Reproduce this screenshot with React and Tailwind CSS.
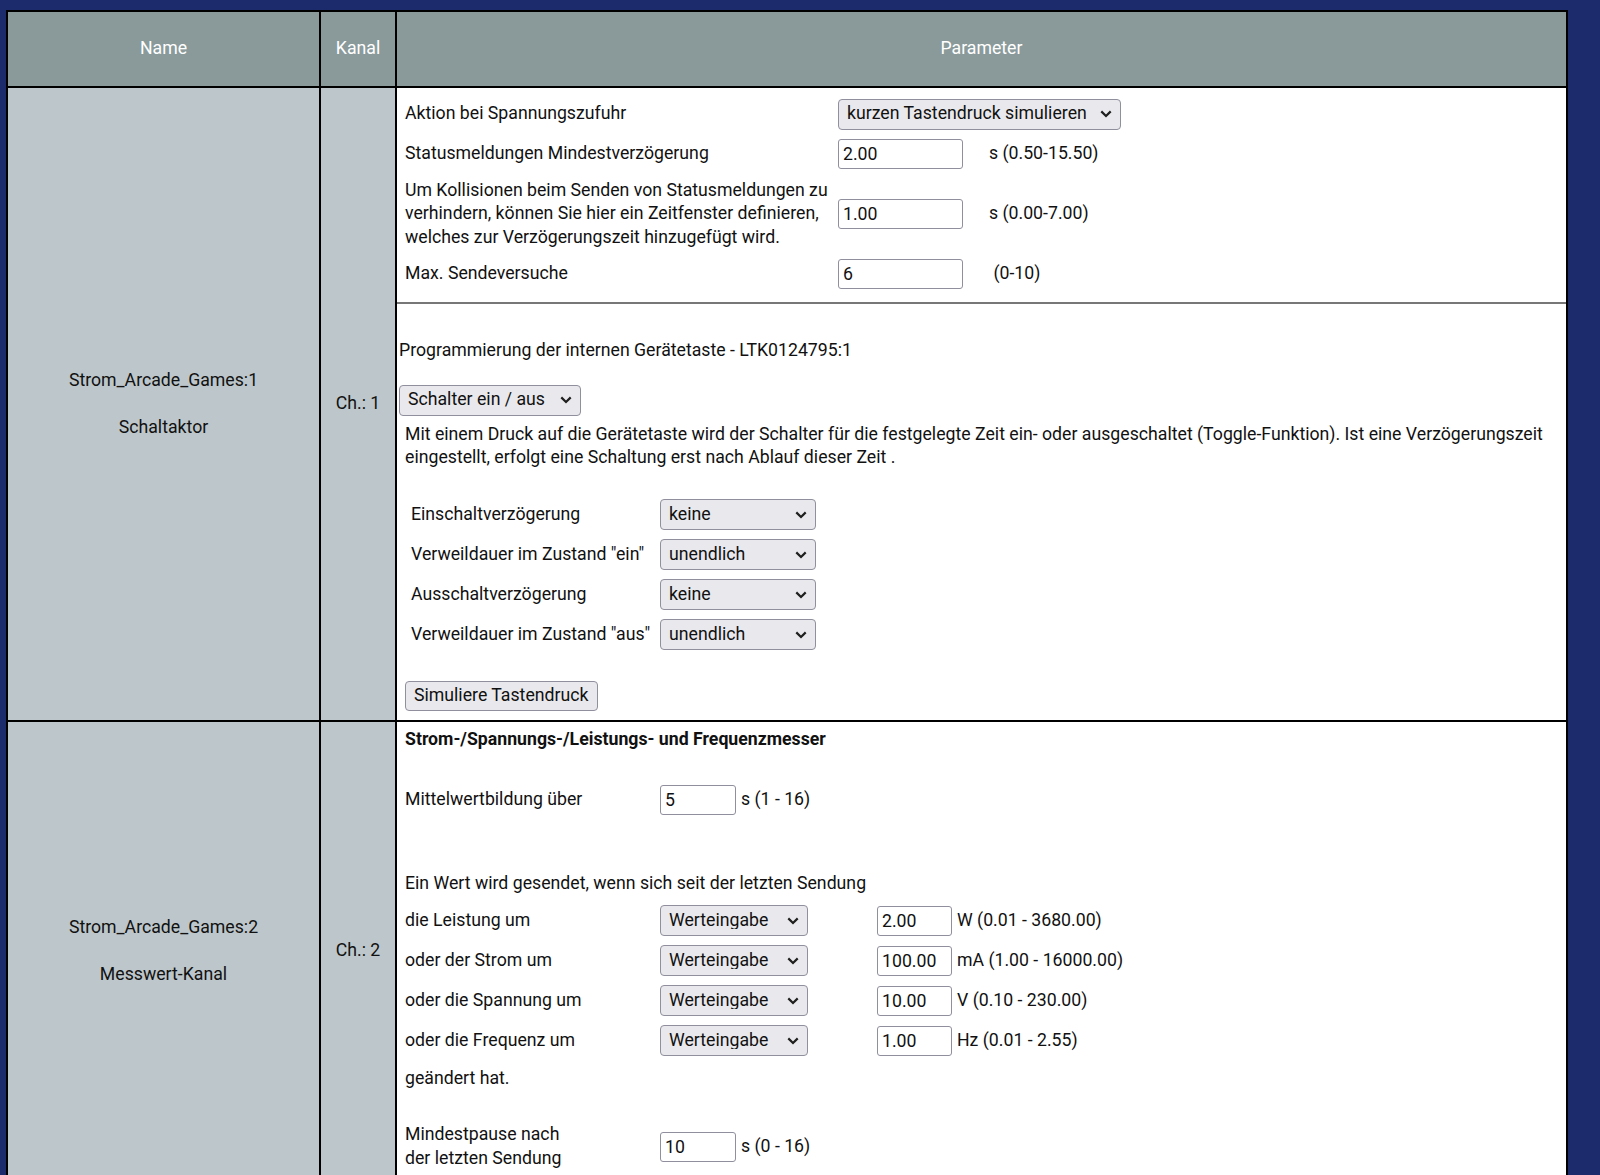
import React from "react";

const Chevron = () => (
  <svg
    width="12"
    height="8"
    viewBox="0 0 12 8"
    className="absolute right-[9px] top-1/2 -translate-y-1/2 pointer-events-none"
  >
    <polyline points="1.3,1.4 6,6 10.7,1.4" fill="none" stroke="#1f1f1f" strokeWidth="2.2" />
  </svg>
);

const Select = ({ value, width }) => (
  <div className={`relative ${width}`}>
    <select
      defaultValue={value}
      className="appearance-none w-full h-[31px] bg-[#e9e9ed] border border-[#8f8f9d] rounded-[4px] pl-2 pr-7 text-[17.7px] text-[#111] leading-none"
    >
      <option>{value}</option>
    </select>
    <Chevron />
  </div>
);

const Input = ({ value, width }) => (
  <input
    readOnly
    value={value}
    className={`${width} h-[30px] bg-white border border-[#8f8f9d] rounded-[3px] px-1 text-[17.7px] text-[#111]`}
  />
);

const Button = ({ children }) => (
  <button className="h-[30px] bg-[#e9e9ed] border border-[#8f8f9d] rounded-[4px] px-2 text-[17.7px] text-[#111]">
    {children}
  </button>
);

const NameCell = ({ name, type }) => (
  <div className="flex items-center justify-center text-center bg-[#bdc7cb] border-r-2 border-black">
    <p>
      {name}
      <br />
      <br />
      {type}
    </p>
  </div>
);

const KanalCell = ({ ch }) => (
  <div className="flex items-center justify-center bg-[#bdc7cb] border-r-2 border-black">
    <p>{ch}</p>
  </div>
);

const topRows = [
  { label: "Statusmeldungen Mindestverzögerung", value: "2.00", unit: "s (0.50-15.50)", h: "h-[40px]" },
  {
    label: "Um Kollisionen beim Senden von Statusmeldungen zu verhindern, können Sie hier ein Zeitfenster definieren, welches zur Verzögerungszeit hinzugefügt wird.",
    value: "1.00",
    unit: "s (0.00-7.00)",
    h: "h-[80px]",
  },
  { label: "Max. Sendeversuche", value: "6", unit: "\u00a0(0-10)", h: "h-[40px]" },
];

const timeRows = [
  { label: "Einschaltverzögerung", value: "keine" },
  { label: 'Verweildauer im Zustand "ein"', value: "unendlich" },
  { label: "Ausschaltverzögerung", value: "keine" },
  { label: 'Verweildauer im Zustand "aus"', value: "unendlich" },
];

const deltaRows = [
  { label: "die Leistung um", value: "2.00", unit: "W (0.01 - 3680.00)" },
  { label: "oder der Strom um", value: "100.00", unit: "mA (1.00 - 16000.00)" },
  { label: "oder die Spannung um", value: "10.00", unit: "V (0.10 - 230.00)" },
  { label: "oder die Frequenz um", value: "1.00", unit: "Hz (0.01 - 2.55)" },
];

export default function App() {
  return (
    <div
      className="min-h-screen bg-[#1b2b6b] pt-[10px] pl-[6px] pb-10 text-[17.7px] leading-[23.5px] text-[#111]"
      style={{ fontFamily: "Roboto, 'Noto Sans', sans-serif" }}
    >
      <div className="w-[1562px] border-2 border-black grid grid-cols-[313px_76px_1fr]">
        {/* header */}
        <div className="h-[76px] flex items-center justify-center bg-[#8a9a9b] text-white border-r-2 border-b-2 border-black">
          Name
        </div>
        <div className="h-[76px] flex items-center justify-center bg-[#8a9a9b] text-white border-r-2 border-b-2 border-black">
          Kanal
        </div>
        <div className="h-[76px] flex items-center justify-center bg-[#8a9a9b] text-white border-b-2 border-black">
          Parameter
        </div>

        {/* row 1 */}
        <NameCell name="Strom_Arcade_Games:1" type="Schaltaktor" />
        <KanalCell ch="Ch.: 1" />
        <div className="bg-white flex flex-col pt-[6px] pb-[9px]">
          <div className="pl-[8px]">
            <div className="h-[40px] flex items-center">
              <span className="w-[433px]">Aktion bei Spannungszufuhr</span>
              <Select value="kurzen Tastendruck simulieren" width="w-[283px]" />
            </div>
            {topRows.map((r) => (
              <div key={r.value} className={`${r.h} flex items-center`}>
                <span className="w-[433px] pr-[4px]">{r.label}</span>
                <div className="w-[151px]">
                  <Input value={r.value} width="w-[125px]" />
                </div>
                <span>{r.unit}</span>
              </div>
            ))}
          </div>
          <div className="mt-[8px] h-[2px] bg-[#777]" />
          <p className="mt-[35px] pl-[2px]">Programmierung der internen Gerätetaste - LTK0124795:1</p>
          <div className="mt-[22px] pl-[2px]">
            <Select value="Schalter ein / aus" width="w-[182px]" />
          </div>
          <p className="mt-[7px] pl-[8px] pr-[10px]">
            Mit einem Druck auf die Gerätetaste wird der Schalter für die festgelegte Zeit ein- oder ausgeschaltet
            (Toggle-Funktion). Ist eine Verzögerungszeit eingestellt, erfolgt eine Schaltung erst nach Ablauf dieser Zeit .
          </p>
          <div className="mt-[25px] pl-[14px]">
            {timeRows.map((r) => (
              <div key={r.label} className="h-[40px] flex items-center">
                <span className="w-[249px]">{r.label}</span>
                <Select value={r.value} width="w-[156px]" />
              </div>
            ))}
          </div>
          <div className="mt-[26px] pl-[8px]">
            <Button>Simuliere Tastendruck</Button>
          </div>
        </div>

        {/* row 2 */}
        <div className="col-span-3 h-[2px] bg-black" />
        <NameCell name="Strom_Arcade_Games:2" type="Messwert-Kanal" />
        <KanalCell ch="Ch.: 2" />
        <div className="bg-white flex flex-col pt-[6px] pb-[10px] pl-[8px]">
          <p className="font-bold">Strom-/Spannungs-/Leistungs- und Frequenzmesser</p>
          <div className="mt-[29px] h-[40px] flex items-center">
            <span className="w-[255px]">Mittelwertbildung über</span>
            <Input value="5" width="w-[76px]" />
            <span className="ml-[5px]">s (1 - 16)</span>
          </div>
          <p className="mt-[52px]">Ein Wert wird gesendet, wenn sich seit der letzten Sendung</p>
          <div className="mt-[5px]">
            {deltaRows.map((r) => (
              <div key={r.label} className="h-[40px] flex items-center">
                <span className="w-[255px]">{r.label}</span>
                <div className="w-[217px]">
                  <Select value="Werteingabe" width="w-[148px]" />
                </div>
                <Input value={r.value} width="w-[75px]" />
                <span className="ml-[5px]">{r.unit}</span>
              </div>
            ))}
          </div>
          <p className="mt-[6px]">geändert hat.</p>
          <div className="mt-[33px] flex items-center">
            <span className="w-[255px]">
              Mindestpause nach
              <br />
              der letzten Sendung
            </span>
            <Input value="10" width="w-[76px]" />
            <span className="ml-[5px]">s (0 - 16)</span>
          </div>
        </div>
      </div>
    </div>
  );
}
